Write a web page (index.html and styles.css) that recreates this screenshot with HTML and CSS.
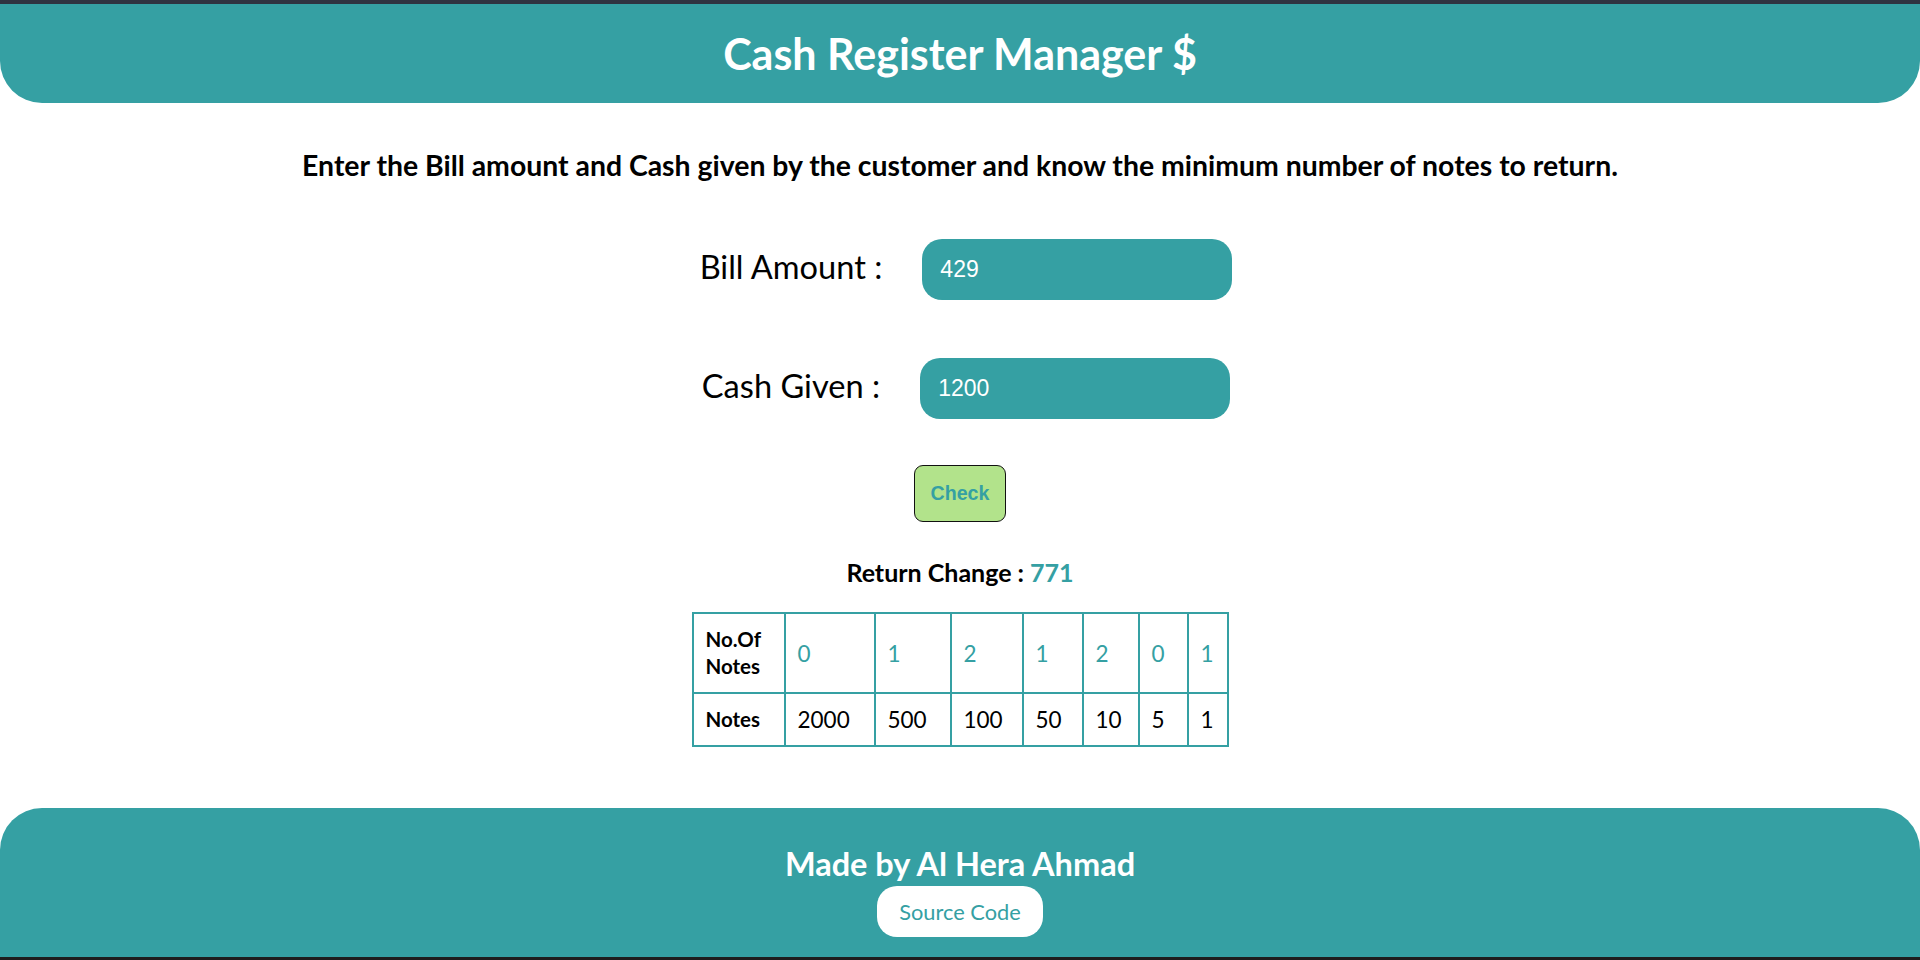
FILE: index.html
```html
<!DOCTYPE html>
<html lang="en">
<head>
<meta charset="UTF-8">
<title>Cash Register Manager</title>
<link rel="stylesheet" href="styles.css">
</head>
<body>
<header class="top">
  <h1 class="title">Cash Register Manager $</h1>
</header>
<main class="main">
  <p class="intro">Enter the Bill amount and Cash given by the customer and know the minimum number of notes to return.</p>
  <div class="field field-bill">
    <label class="field-label" for="bill">Bill Amount :</label>
    <input class="field-input" id="bill" type="text" value="429">
  </div>
  <div class="field field-cash">
    <label class="field-label" for="cash">Cash Given :</label>
    <input class="field-input" id="cash" type="text" value="1200">
  </div>
  <button class="check" type="button">Check</button>
  <p class="result">Return Change : <span class="result-value">771</span></p>
  <table class="notes">
    <colgroup>
      <col class="col-h"><col class="col-a"><col class="col-b"><col class="col-c"><col class="col-d"><col class="col-e"><col class="col-f"><col class="col-g">
    </colgroup>
    <tr>
      <th>No.Of Notes</th>
      <td class="count">0</td><td class="count">1</td><td class="count">2</td><td class="count">1</td><td class="count">2</td><td class="count">0</td><td class="count">1</td>
    </tr>
    <tr>
      <th>Notes</th>
      <td>2000</td><td>500</td><td>100</td><td>50</td><td>10</td><td>5</td><td>1</td>
    </tr>
  </table>
</main>
<footer class="foot">
  <p class="made">Made by Al Hera Ahmad</p>
  <a class="source" href="#">Source Code</a>
</footer>
</body>
</html>
```

FILE: styles.css
```css
* { box-sizing: border-box; }
html, body { margin: 0; padding: 0; }
body {
  font-family: Lato, "Open Sans", sans-serif;
  background: #ffffff;
  color: #000;
  border-top: 4px solid #2f3441;
  border-bottom: 3px solid #1e1e1e;
  height: 960px;
  display: flex;
  flex-direction: column;
  overflow: hidden;
}
.top {
  background: #35a0a3;
  height: 99px;
  border-radius: 0 0 42px 42px;
  display: flex;
  align-items: center;
  justify-content: center;
  flex-shrink: 0;
}
.title {
  margin: 0;
  color: #fff;
  font-size: 43px;
  font-weight: 700;
}
.main {
  flex: 1;
  display: flex;
  flex-direction: column;
  align-items: center;
}
.intro {
  margin: 46px 0 0;
  font-size: 28.4px;
  font-weight: 700;
  line-height: 32px;
}
.field {
  display: flex;
  align-items: center;
  padding-left: 12px;
}
.field-bill { margin-top: 58px; }
.field-cash { margin-top: 58px; }
.field-label {
  font-size: 32.6px;
  line-height: 40px;
  margin-right: 40px;
  padding-bottom: 6px;
}
.field-input {
  width: 310px;
  height: 61px;
  border: none;
  border-radius: 20px;
  background: #35a0a3;
  color: #fff;
  font-family: "Liberation Sans", Arial, sans-serif;
  font-size: 23px;
  padding: 0 18px;
  outline: none;
}
.check {
  margin-top: 46px;
  background: #b2e38b;
  border: 1px solid #111;
  border-radius: 9px;
  color: #35a0a3;
  font-family: "Liberation Sans", Arial, sans-serif;
  font-weight: 700;
  font-size: 19.6px;
  padding: 0 16px;
  height: 57px;
}
.result {
  margin: 35px 0 0;
  font-size: 25px;
  font-weight: 700;
  line-height: 30px;
}
.result-value { color: #35a0a3; }
.notes {
  margin-top: 25px;
  border-collapse: collapse;
  table-layout: fixed;
  width: 535px;
  font-size: 22.5px;
}
.col-h { width: 92px; }
.col-a { width: 90px; }
.col-b { width: 76px; }
.col-c { width: 72px; }
.col-d { width: 60px; }
.col-e { width: 56px; }
.col-f { width: 49px; }
.col-g { width: 40px; }
.notes th, .notes td {
  border: 2px solid #35a0a3;
  padding: 12px 8px 12px 12px;
  line-height: 27px;
  text-align: left;
}
.notes th {
  font-size: 20.5px;
  font-weight: 700;
}
.notes td { font-weight: 400; }
.notes .count { color: #35a0a3; }
.foot {
  flex-shrink: 0;
  height: 149px;
  background: #35a0a3;
  border-radius: 42px 42px 0 0;
  display: flex;
  flex-direction: column;
  align-items: center;
  padding-top: 37px;
}
.made {
  margin: 0;
  color: #fff;
  font-size: 32.5px;
  font-weight: 700;
  line-height: 38px;
}
.source {
  margin-top: 3px;
  background: #fff;
  color: #35a0a3;
  text-decoration: none;
  font-size: 21.8px;
  height: 51px;
  width: 166px;
  border-radius: 20px;
  display: flex;
  align-items: center;
  justify-content: center;
}
```
